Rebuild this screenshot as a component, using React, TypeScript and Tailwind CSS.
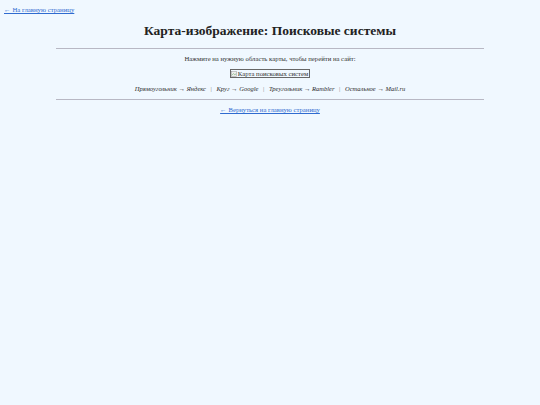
export default function App() {
  const serif = { fontFamily: '"Liberation Serif", "Times New Roman", serif' };
  const sep = <span className="mx-[3px] not-italic text-[#777]">|</span>;
  return (
    <div className="min-h-[405px] w-full bg-[#f0f8ff] text-[#222] leading-none" style={serif}>
      <div className="px-[4px] pt-[6px]">
        <a href="#" className="block text-[6.75px] leading-[8px] text-[#2f6bd0] underline">← На главную страницу</a>
      </div>
      <h1 className="mt-[9px] text-center text-[13.5px] font-bold leading-[16px] text-[#222]">
        Карта-изображение: Поисковые системы
      </h1>
      <div className="mx-auto mt-[9px] w-[428px]">
        <div className="h-px bg-[#b8b8c4]" />
        <p className="mt-[6px] text-center text-[6.7px] leading-[8px] text-[#333]">
          Нажмите на нужную область карты, чтобы перейти на сайт:
        </p>
        <div className="mt-[6px] flex justify-center">
          <span className="inline-flex h-[9px] items-center border border-[#666] pr-[1px] text-[6.7px] leading-[7px] text-[#333]">
            <svg width="6" height="6" viewBox="0 0 7 7" className="mr-[1px]">
              <rect x="0.5" y="0.5" width="6" height="6" fill="#eee" stroke="#999" strokeWidth="0.6" />
              <path d="M1 5 L3 3 L4.5 4.5 L6 3" stroke="#6a6" strokeWidth="0.7" fill="none" />
            </svg>
            Карта поисковых систем
          </span>
        </div>
        <p className="mt-[7px] text-center text-[6.5px] italic leading-[8px] text-[#2a2a2a]">
          Прямоугольник → Яндекс {sep} Круг → Google {sep} Треугольник → Rambler {sep} Остальное → Mail.ru
        </p>
        <div className="mt-[6px] h-px bg-[#b8b8c4]" />
        <p className="mt-[6px] text-center text-[6.7px] leading-[8px]">
          <a href="#" className="text-[#2f6bd0] underline">← Вернуться на главную страницу</a>
        </p>
      </div>
    </div>
  );
}
